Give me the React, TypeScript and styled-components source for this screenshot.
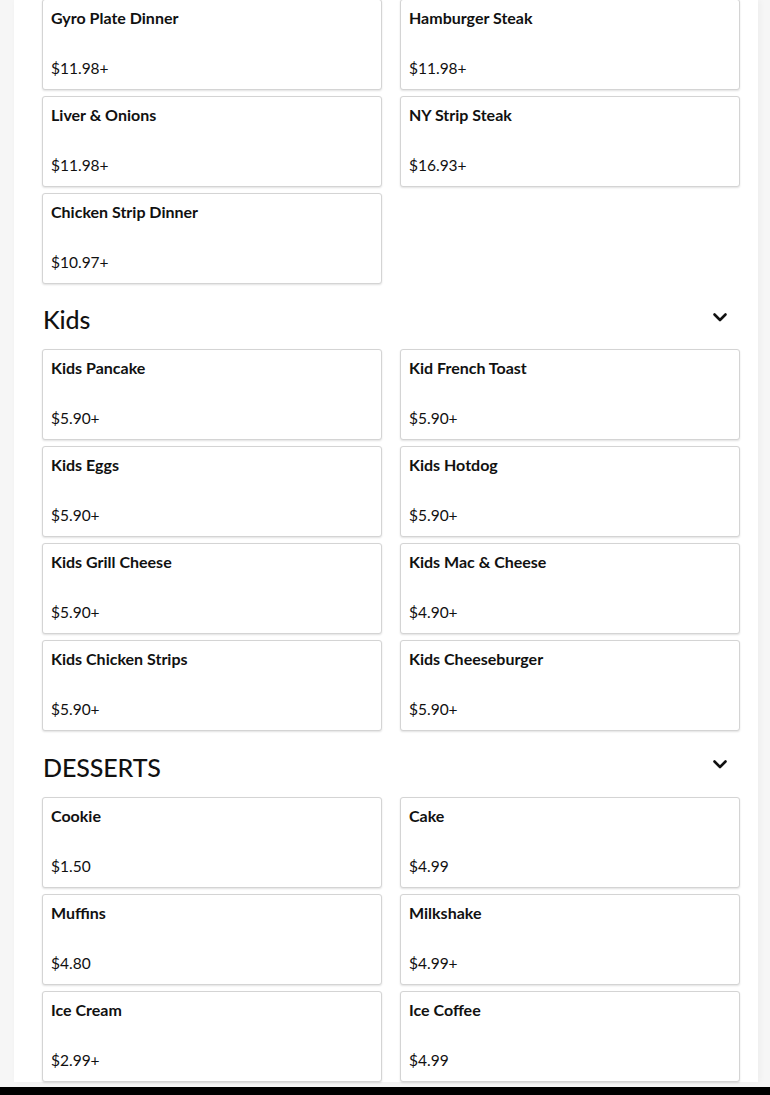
import React from "react";
import styled, { createGlobalStyle } from "styled-components";

const Global = createGlobalStyle`
  html, body { margin: 0; padding: 0; }
  body {
    background: #f6f6f6;
    font-family: "Lato", "Noto Sans", sans-serif;
    color: #111;
    overflow: hidden;
  }
`;

const Page = styled.div`
  display: flex;
  flex-direction: column;
  min-height: 1095px;
`;

const Column = styled.main`
  margin-left: 14px;
  width: 744px;
  background: #fff;
  padding: 0 18px 0 28px;
  box-sizing: border-box;
  flex: 1;
  box-shadow: 2px 0 6px rgba(0, 0, 0, 0.04);
`;

const Section = styled.section`
  display: flex;
  flex-direction: column;
`;

const SectionHeader = styled.div<{ $tall?: boolean }>`
  display: flex;
  align-items: center;
  justify-content: space-between;
  height: ${(p) => (p.$tall ? "66px" : "65px")};
  padding: 0 12px 0 1px;
`;

const SectionTitle = styled.h2`
  margin: 0;
  font-size: 25px;
  font-weight: 500;
  letter-spacing: -0.1px;
  line-height: 1;
  padding-top: 6px;
  color: #111;
`;

const Toggle = styled.button`
  border: 0;
  background: none;
  padding: 0;
  margin-top: 0;
  display: flex;
  cursor: pointer;
`;

const Grid = styled.div<{ $offset?: boolean }>`
  display: grid;
  grid-template-columns: 340px 340px;
  column-gap: 18px;
  row-gap: 6px;
  margin-top: ${(p) => (p.$offset ? "-1px" : "0")};
`;

const Card = styled.div`
  height: 91px;
  box-sizing: border-box;
  border: 1px solid #d4d4d4;
  border-radius: 3px;
  box-shadow: 0 1px 2px rgba(0, 0, 0, 0.12);
  background: #fff;
  padding: 8px 8px 0 8px;
  display: flex;
  flex-direction: column;
`;

const ItemName = styled.div`
  font-size: 16px;
  font-weight: 700;
  line-height: 20px;
  color: #111;
`;

const Price = styled.div`
  margin-top: 30px;
  font-size: 15.5px;
  font-weight: 400;
  line-height: 20px;
  color: #111;
`;

const Footer = styled.footer`
  height: 8px;
  background: #000;
  margin-top: 5px;
`;

const Chevron = () => (
  <svg width="16" height="12" viewBox="0 0 16 12" fill="none">
    <path d="M2.5 3.5 L8 9 L13.5 3.5" stroke="#111" strokeWidth="2.6" strokeLinecap="round" strokeLinejoin="round" />
  </svg>
);

type Item = { name: string; price: string };

const dinners: Item[] = [
  { name: "Gyro Plate Dinner", price: "$11.98+" },
  { name: "Hamburger Steak", price: "$11.98+" },
  { name: "Liver & Onions", price: "$11.98+" },
  { name: "NY Strip Steak", price: "$16.93+" },
  { name: "Chicken Strip Dinner", price: "$10.97+" },
];

const kids: Item[] = [
  { name: "Kids Pancake", price: "$5.90+" },
  { name: "Kid French Toast", price: "$5.90+" },
  { name: "Kids Eggs", price: "$5.90+" },
  { name: "Kids Hotdog", price: "$5.90+" },
  { name: "Kids Grill Cheese", price: "$5.90+" },
  { name: "Kids Mac & Cheese", price: "$4.90+" },
  { name: "Kids Chicken Strips", price: "$5.90+" },
  { name: "Kids Cheeseburger", price: "$5.90+" },
];

const desserts: Item[] = [
  { name: "Cookie", price: "$1.50" },
  { name: "Cake", price: "$4.99" },
  { name: "Muffins", price: "$4.80" },
  { name: "Milkshake", price: "$4.99+" },
  { name: "Ice Cream", price: "$2.99+" },
  { name: "Ice Coffee", price: "$4.99" },
];

const Items = ({ items, offset }: { items: Item[]; offset?: boolean }) => (
  <Grid $offset={offset}>
    {items.map((it) => (
      <Card key={it.name}>
        <ItemName>{it.name}</ItemName>
        <Price>{it.price}</Price>
      </Card>
    ))}
  </Grid>
);

const Category = ({ title, items, tall }: { title: string; items: Item[]; tall?: boolean }) => (
  <Section>
    <SectionHeader $tall={tall}>
      <SectionTitle>{title}</SectionTitle>
      <Toggle aria-label={`Toggle ${title}`}>
        <Chevron />
      </Toggle>
    </SectionHeader>
    <Items items={items} />
  </Section>
);

export default function App() {
  return (
    <>
      <Global />
      <Page>
        <Column>
          <Section>
            <Items items={dinners} offset />
          </Section>
          <Category title="Kids" items={kids} />
          <Category title="DESSERTS" items={desserts} tall />
        </Column>
        <Footer />
      </Page>
    </>
  );
}
